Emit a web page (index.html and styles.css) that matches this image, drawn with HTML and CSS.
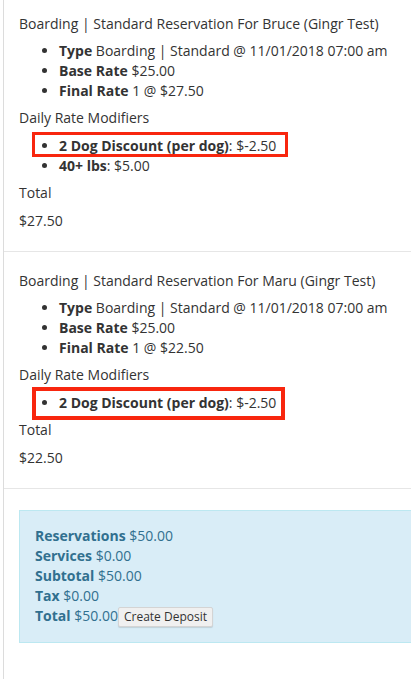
FILE: index.html
```html
<!DOCTYPE html>
<html lang="en">
<head>
<meta charset="utf-8">
<title>Invoice</title>
<link rel="stylesheet" href="styles.css">
</head>
<body>
<div class="panel">
  <section class="item item-first">
    <div class="item-title">Boarding | Standard Reservation For Bruce (Gingr Test)</div>
    <ul class="details">
      <li><b>Type</b> Boarding | Standard @ 11/01/2018 07:00 am</li>
      <li><b>Base Rate</b> $25.00</li>
      <li><b>Final Rate</b> 1 @ $27.50</li>
    </ul>
    <div class="mod-title">Daily Rate Modifiers</div>
    <ul class="mods">
      <li class="flag flag-a"><b>2 Dog Discount (per dog)</b>: $-2.50</li>
      <li><b>40+ lbs</b>: $5.00</li>
    </ul>
    <div class="total-label">Total</div>
    <div class="total-value">$27.50</div>
  </section>
  <section class="item">
    <div class="item-title">Boarding | Standard Reservation For Maru (Gingr Test)</div>
    <ul class="details">
      <li><b>Type</b> Boarding | Standard @ 11/01/2018 07:00 am</li>
      <li><b>Base Rate</b> $25.00</li>
      <li><b>Final Rate</b> 1 @ $22.50</li>
    </ul>
    <div class="mod-title">Daily Rate Modifiers</div>
    <ul class="mods">
      <li class="flag flag-b"><b>2 Dog Discount (per dog)</b>: $-2.50</li>
    </ul>
    <div class="total-label">Total</div>
    <div class="total-value">$22.50</div>
  </section>
  <div class="summary-wrap">
    <div class="summary">
      <div><b>Reservations</b> $50.00</div>
      <div><b>Services</b> $0.00</div>
      <div><b>Subtotal</b> $50.00</div>
      <div><b>Tax</b> $0.00</div>
      <div><b>Total</b> $50.00<button class="btn" type="button">Create Deposit</button></div>
    </div>
  </div>
</div>
</body>
</html>
```
FILE: styles.css
```css
html, body {
  margin: 0;
  padding: 0;
  overflow: hidden;
  background: #fff;
}
body {
  font-family: "Open Sans", "Liberation Sans", sans-serif;
  font-size: 14px;
  line-height: 20px;
  color: #333;
}
b {
  font-weight: 700;
}
.panel {
  margin-left: 3px;
  min-height: 100vh;
  border-left: 1px solid #dcdcdc;
}
.item {
  padding: 19px 15px 20px;
  border-bottom: 1px solid #e6e6e6;
}
.item-first {
  padding-top: 14px;
}
.item-title {
  margin-bottom: 7px;
}
ul {
  margin: 0;
  padding-left: 40px;
}
.details {
  margin-bottom: 7px;
}
.mod-title {
  margin-bottom: 8px;
}
.mods {
  margin-bottom: 7px;
}
.total-label {
  margin-bottom: 8px;
}
.flag {
  position: relative;
  width: max-content;
}
.flag::after {
  content: "";
  position: absolute;
  box-sizing: border-box;
  border-style: solid;
  border-color: #f8260e;
  pointer-events: none;
}
.flag-a::after {
  left: -27px;
  top: -4px;
  width: 256px;
  height: 25px;
  border-width: 3.5px;
}
.flag-b::after {
  left: -27px;
  top: -6px;
  width: 253px;
  height: 33px;
  border-width: 4.5px;
}
.summary-wrap {
  padding: 21px 0 21px 15px;
}
.summary {
  background: #d9edf7;
  border: 1px solid #bce8f1;
  border-right: 0;
  color: #31708f;
  padding: 15px;
}
.btn {
  font-family: "Open Sans", "Liberation Sans", sans-serif;
  font-size: 12px;
  line-height: 16px;
  color: #333;
  background: #f0f0f0;
  border: 1px solid #d4d4d4;
  border-radius: 2px;
  box-shadow: 0 1px 1px rgba(0, 0, 0, 0.12);
  padding: 1px 5px;
  margin: 0;
  vertical-align: baseline;
}
```
